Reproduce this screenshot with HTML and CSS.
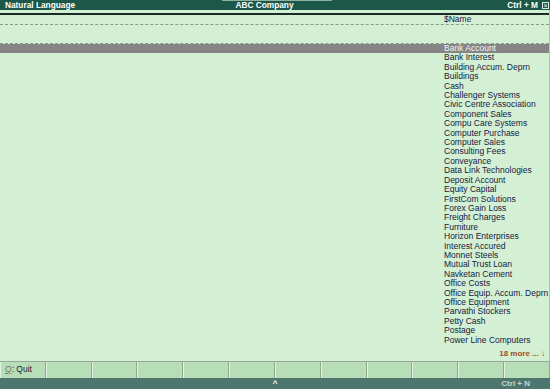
FILE: index.html
```html
<html>
<head>
<link rel="stylesheet" href="styles.css">
<title>Natural Language</title>
</head>
<body>
<div class="screen">
  <div class="titlebar">
    <span class="title-left">Natural Language</span>
    <span class="title-mid">ABC Company</span>
    <span class="title-right">Ctrl + M <span class="closebox">&#215;</span></span>
  </div>

  <div class="main">
    <div class="topgap"></div>
    <div class="rule"></div>
    <div class="colhead"><span class="col">$Name</span></div>
    <div class="blank"></div>

    <div class="list">
      <div class="row selected"><span class="col">Bank Account</span></div>
      <div class="row"><span class="col">Bank Interest</span></div>
      <div class="row"><span class="col">Building Accum. Deprn</span></div>
      <div class="row"><span class="col">Buildings</span></div>
      <div class="row"><span class="col">Cash</span></div>
      <div class="row"><span class="col">Challenger Systems</span></div>
      <div class="row"><span class="col">Civic Centre Association</span></div>
      <div class="row"><span class="col">Component Sales</span></div>
      <div class="row"><span class="col">Compu Care Systems</span></div>
      <div class="row"><span class="col">Computer Purchase</span></div>
      <div class="row"><span class="col">Computer Sales</span></div>
      <div class="row"><span class="col">Consulting Fees</span></div>
      <div class="row"><span class="col">Conveyance</span></div>
      <div class="row"><span class="col">Data Link Technologies</span></div>
      <div class="row"><span class="col">Deposit Account</span></div>
      <div class="row"><span class="col">Equity Capital</span></div>
      <div class="row"><span class="col">FirstCom Solutions</span></div>
      <div class="row"><span class="col">Forex Gain Loss</span></div>
      <div class="row"><span class="col">Freight Charges</span></div>
      <div class="row"><span class="col">Furniture</span></div>
      <div class="row"><span class="col">Horizon Enterprises</span></div>
      <div class="row"><span class="col">Interest Accured</span></div>
      <div class="row"><span class="col">Monnet Steels</span></div>
      <div class="row"><span class="col">Mutual Trust Loan</span></div>
      <div class="row"><span class="col">Navketan Cement</span></div>
      <div class="row"><span class="col">Office Costs</span></div>
      <div class="row"><span class="col">Office Equip. Accum. Deprn</span></div>
      <div class="row"><span class="col">Office Equipment</span></div>
      <div class="row"><span class="col">Parvathi Stockers</span></div>
      <div class="row"><span class="col">Petty Cash</span></div>
      <div class="row"><span class="col">Postage</span></div>
      <div class="row"><span class="col">Power Line Computers</span></div>
    </div>

    <div class="more">18 more ... <span class="arrow">&#8595;</span></div>
  </div>

  <div class="buttons">
    <div class="btn"><span class="key">Q</span>: Quit</div>
    <div class="btn"></div>
    <div class="btn"></div>
    <div class="btn"></div>
    <div class="btn"></div>
    <div class="btn"></div>
    <div class="btn"></div>
    <div class="btn"></div>
    <div class="btn"></div>
    <div class="btn"></div>
    <div class="btn"></div>
    <div class="btn"></div>
  </div>

  <div class="statusbar">
    <span class="caret">&#94;</span>
    <span class="status-right">Ctrl + N</span>
  </div>
</div>
</body>
</html>
```

FILE: styles.css
```css
/* page */
* {box-sizing: border-box;}

body {
  margin: 0;
  font-family: "Liberation Sans", Arial, Helvetica, sans-serif;
  background: #d4f0d4;
}

.screen {
  width: 550px;
  height: 389px;
  display: flex;
  flex-direction: column;
  overflow: hidden;
}

/* title bar */
.titlebar {
  height: 10px;
  background-color: #1c5848;
  color: #ffffff;
  font-size: 8.3px;
  font-weight: bold;
  line-height: 10px;
  display: grid;
  grid-template-columns: 1fr auto 1fr;
  padding: 0 1px 0 5px;
}

.title-mid {
  padding: 0 38px 0 13px;
  border-top: 1px solid #8fb0a0;
  line-height: 9px;
}

.title-right {
  justify-self: end;
  display: flex;
  align-items: center;
}

.closebox {
  width: 7px;
  height: 7px;
  margin-left: 4px;
  border: 1px solid #d8e8e0;
  font-size: 7px;
  line-height: 5px;
  text-align: center;
  font-weight: normal;
}

/* main list area */
.main {
  flex: 1;
  display: flex;
  flex-direction: column;
  border-right: 1px solid #b0c8b0;
  color: #16203c;
  font-size: 8.5px;
}

.topgap {height: 3px;}

.rule {
  height: 2px;
  background-color: #1e2a26;
}

.col {padding-left: 444px;}

.colhead {
  height: 10px;
  line-height: 9px;
  border-bottom: 1px dashed #8a9a8a;
}

.blank {
  height: 19px;
  border-bottom: 1px dashed #8a9a8a;
}

.row {
  height: 9.42px;
  line-height: 9.42px;
  white-space: nowrap;
}

.row.selected {
  background-color: #858585;
  color: #f2f2f2;
}

.more {
  margin-top: auto;
  margin-bottom: 2px;
  text-align: right;
  padding-right: 4px;
  color: #a04a28;
  font-weight: bold;
  font-size: 8px;
  line-height: 10px;
}

.arrow {font-weight: normal;}

/* button bar */
.buttons {
  height: 17px;
  display: grid;
  grid-template-columns: repeat(12, 1fr);
  border-top: 1px solid #98a898;
  background-color: #b8deb8;
}

.btn {
  border-left: 1px solid #e4f2e4;
  border-right: 1px solid #8fa88f;
  font-size: 8.5px;
  line-height: 15px;
  padding-left: 4px;
  color: #16203c;
}

.key {
  color: #707870;
  text-decoration: underline;
}

/* status bar */
.statusbar {
  height: 11px;
  background-color: #3f6a62;
  background-image: radial-gradient(#5c857b 0.6px, transparent 0.8px);
  background-size: 2px 2px;
  display: grid;
  grid-template-columns: 1fr auto 1fr;
  color: #c8d8d4;
  font-size: 8px;
  font-weight: bold;
  line-height: 11px;
}

.caret {
  grid-column: 2;
  color: #ffffff;
}

.status-right {
  justify-self: end;
  padding-right: 20px;
}
```
